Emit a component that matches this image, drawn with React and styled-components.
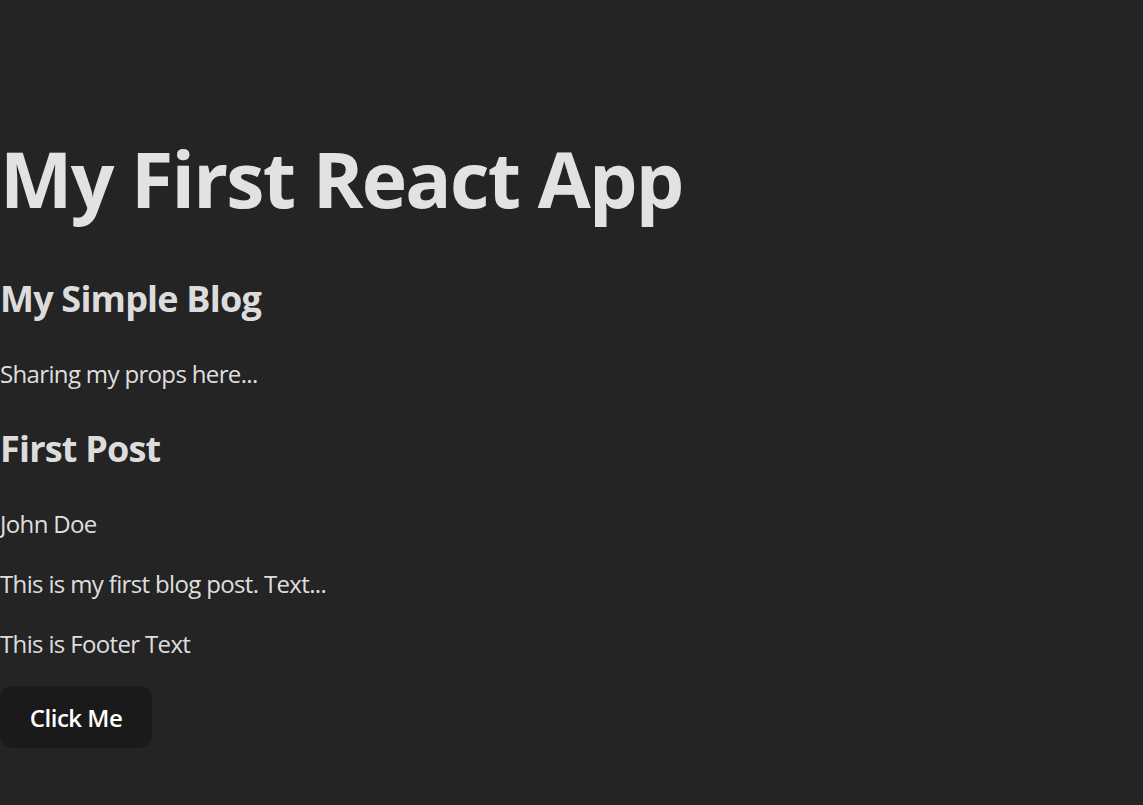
import styled, { createGlobalStyle } from 'styled-components'

const GlobalStyle = createGlobalStyle`
  html, body {
    margin: 0;
    padding: 0;
    background-color: #242424;
  }

  body {
    min-height: 100vh;
    font-family: 'Open Sans', 'Noto Sans', sans-serif;
    color: rgba(255, 255, 255, 0.87);
    line-height: 1.5;
    font-weight: 400;
    -webkit-font-smoothing: antialiased;
  }
`

const Page = styled.div`
  padding-top: 137px;
  padding-bottom: 40px;
`

const Title = styled.h1`
  margin: 0 0 51px;
  font-size: 76.8px;
  line-height: 1.1;
  font-weight: 700;
  letter-spacing: -1.7px;
`

const Heading = styled.h2`
  margin: 30px 0;
  font-size: 36px;
  line-height: 54px;
  font-weight: 700;
  letter-spacing: -0.8px;
`

const Text = styled.p`
  margin: 24px 0;
  font-size: 24px;
  line-height: 36px;
  letter-spacing: -0.65px;
`

const Button = styled.button`
  border-radius: 12px;
  border: 1px solid transparent;
  padding: 14.4px 28.8px;
  font-size: 24px;
  line-height: 31px;
  font-weight: 600;
  font-family: inherit;
  letter-spacing: -0.5px;
  color: #fff;
  background-color: #1a1a1a;
  cursor: pointer;
  transition: border-color 0.25s;

  &:hover {
    border-color: #646cff;
  }
`

const Header = ({ title }) => <Title>{title}</Title>

const Blog = ({ name, tagline }) => (
  <section>
    <Heading>{name}</Heading>
    <Text>{tagline}</Text>
  </section>
)

const Post = ({ title, author, body }) => (
  <article>
    <Heading>{title}</Heading>
    <Text>{author}</Text>
    <Text>{body}</Text>
  </article>
)

const Footer = ({ text }) => <Text>{text}</Text>

export default function App() {
  return (
    <>
      <GlobalStyle />
      <Page>
        <Header title="My First React App" />
        <Blog name="My Simple Blog" tagline="Sharing my props here..." />
        <Post title="First Post" author="John Doe" body="This is my first blog post. Text..." />
        <Footer text="This is Footer Text" />
        <Button onClick={() => console.log('clicked')}>Click Me</Button>
      </Page>
    </>
  )
}
